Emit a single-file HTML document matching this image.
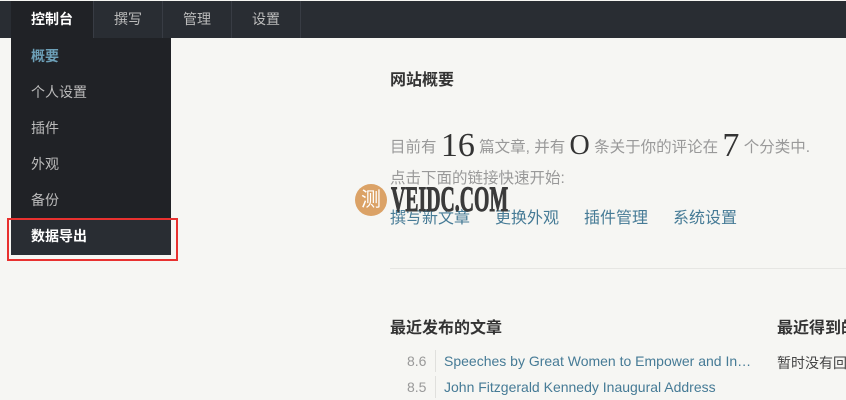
<!DOCTYPE html>
<html><head><meta charset="utf-8"><style>
*{margin:0;padding:0;box-sizing:border-box}
body{width:846px;height:400px;overflow:hidden;background:#f6f6f3;font-family:"Liberation Sans","Noto Sans CJK SC",sans-serif;position:relative}
.bar{position:absolute;left:0;top:1px;width:846px;height:37px;background:#292d33}
.nav a{position:absolute;top:1px;height:37px;line-height:37px;font-size:14px;color:#bbb;text-align:center;border-right:1px solid #383c44}
.menu{position:absolute;left:11px;top:38px;width:160px;height:217px;background:#202226}
.menu div{height:36px;line-height:36px;padding-left:20px;font-size:14px;color:#bbb}
.red{position:absolute;left:7px;top:218px;width:171px;height:43px;border:2px solid #e8312f}
.t{position:absolute;color:#999;font-size:14px;white-space:nowrap}
.big{font-family:"Liberation Serif",serif;font-size:34px;color:#333;vertical-align:-4px}
a{color:#467b96;text-decoration:none}
h3{position:absolute;font-size:16px;color:#333;font-weight:bold;white-space:nowrap}
</style></head><body>
<div class="bar"></div>
<div class="nav">
<a style="left:11px;width:83px;background:#202226;color:#fff;font-weight:bold">控制台</a>
<a style="left:94px;width:69px">撰写</a>
<a style="left:163px;width:69px">管理</a>
<a style="left:232px;width:69px">设置</a>
</div>
<div class="menu">
<div style="color:#6da0b8;font-weight:bold">概要</div>
<div>个人设置</div>
<div>插件</div>
<div>外观</div>
<div>备份</div>
<div style="background:#292d33;color:#fff;font-weight:bold;height:37px">数据导出</div>
</div>
<div class="red"></div>
<h3 style="left:390px;top:66px">网站概要</h3>
<div class="t" style="left:390px;top:127px;font-size:15.5px">目前有 <span class="big">16</span> 篇文章, 并有 <span class="big" style="font-size:28px;vertical-align:-2px">O</span> 条关于你的评论在 <span class="big">7</span> 个分类中.</div>
<div class="t" style="left:390px;top:166px;font-size:15.5px">点击下面的链接快速开始:</div>
<div class="t" style="left:390px;top:204px;font-size:16px"><a>撰写新文章</a><a style="margin-left:25px">更换外观</a><a style="margin-left:25px">插件管理</a><a style="margin-left:25px">系统设置</a></div>
<div style="position:absolute;left:355px;top:184px;width:32px;height:32px;border-radius:50%;background:#dba266;color:#fff;font-size:20px;line-height:32px;text-align:center">测</div>
<div style="position:absolute;left:391px;top:180px;font-family:'Liberation Serif',serif;font-weight:bold;font-size:36px;line-height:38px;color:#3a3a3a;transform:scaleX(0.55);transform-origin:left;-webkit-text-stroke:1px #3a3a3a">VEIDC.COM</div>
<div style="position:absolute;left:390px;top:268px;width:456px;height:1px;background:#e6e6e3"></div>
<h3 style="left:390px;top:314px">最近发布的文章</h3>
<h3 style="left:777px;top:314px">最近得到的</h3>
<div class="t" style="left:407px;top:353px">8.6</div>
<div class="t" style="left:407px;top:379px">8.5</div>
<div style="position:absolute;left:435px;top:350px;width:1px;height:22px;background:#e0e0dd"></div>
<div style="position:absolute;left:435px;top:376px;width:1px;height:22px;background:#e0e0dd"></div>
<div class="t" style="left:444px;top:353px"><a>Speeches by Great Women to Empower and In…</a></div>
<div class="t" style="left:444px;top:379px"><a>John Fitzgerald Kennedy Inaugural Address</a></div>
<div class="t" style="left:777px;top:353px;color:#444">暂时没有回</div>
</body></html>
